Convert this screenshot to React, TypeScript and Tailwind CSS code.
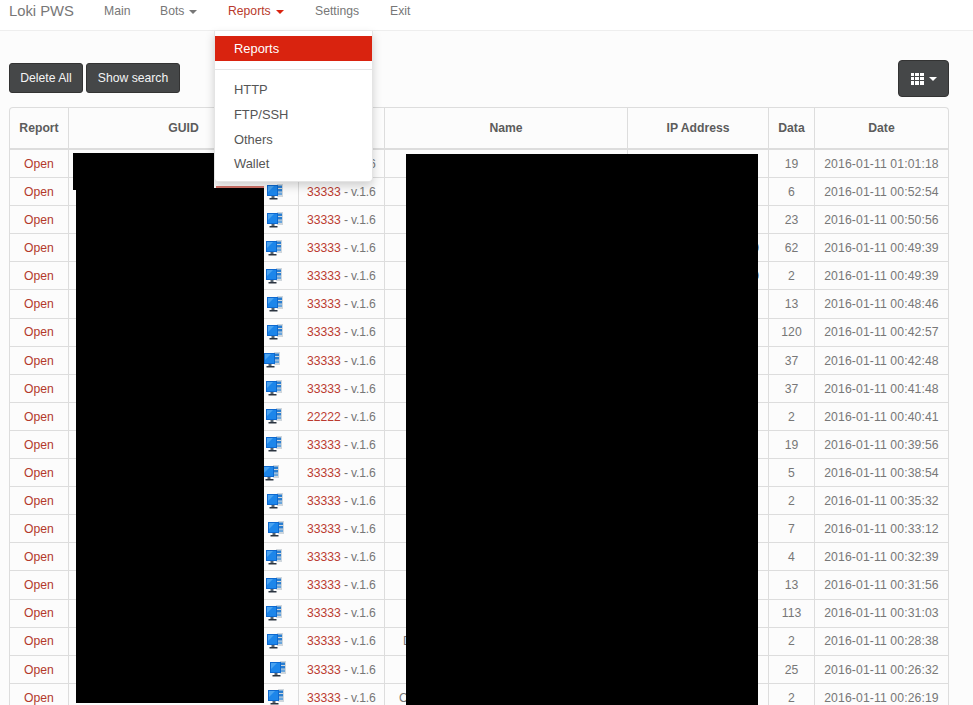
import React from "react";

type Row = {
  version: string;
  data: number;
  date: string;
  iconLeft: number;
  name?: string;
  nameLeft?: number;
  ip?: boolean;
};

const rows: Row[] = [
  { version: "33333", data: 19, date: "2016-01-11 01:01:18", iconLeft: 198 },
  { version: "33333", data: 6, date: "2016-01-11 00:52:54", iconLeft: 198 },
  { version: "33333", data: 23, date: "2016-01-11 00:50:56", iconLeft: 198 },
  { version: "33333", data: 62, date: "2016-01-11 00:49:39", iconLeft: 197, ip: true },
  { version: "33333", data: 2, date: "2016-01-11 00:49:39", iconLeft: 197, ip: true },
  { version: "33333", data: 13, date: "2016-01-11 00:48:46", iconLeft: 198 },
  { version: "33333", data: 120, date: "2016-01-11 00:42:57", iconLeft: 198 },
  { version: "33333", data: 37, date: "2016-01-11 00:42:48", iconLeft: 195 },
  { version: "33333", data: 37, date: "2016-01-11 00:41:48", iconLeft: 197 },
  { version: "22222", data: 2, date: "2016-01-11 00:40:41", iconLeft: 197 },
  { version: "33333", data: 19, date: "2016-01-11 00:39:56", iconLeft: 197 },
  { version: "33333", data: 5, date: "2016-01-11 00:38:54", iconLeft: 194 },
  { version: "33333", data: 2, date: "2016-01-11 00:35:32", iconLeft: 198 },
  { version: "33333", data: 7, date: "2016-01-11 00:33:12", iconLeft: 199 },
  { version: "33333", data: 4, date: "2016-01-11 00:32:39", iconLeft: 197 },
  { version: "33333", data: 13, date: "2016-01-11 00:31:56", iconLeft: 197 },
  { version: "33333", data: 113, date: "2016-01-11 00:31:03", iconLeft: 197 },
  { version: "33333", data: 2, date: "2016-01-11 00:28:38", iconLeft: 198, name: "D", nameLeft: 18 },
  { version: "33333", data: 25, date: "2016-01-11 00:26:32", iconLeft: 201 },
  { version: "33333", data: 2, date: "2016-01-11 00:26:19", iconLeft: 199, name: "O", nameLeft: 14 },
];

const Caret = ({ className }: { className: string }) => (
  <span className={`ml-[5px] inline-block h-0 w-0 border-x-[4px] border-t-[4px] border-x-transparent align-middle ${className}`} />
);

const ComputerIcon = () => (
  <svg width="16" height="16" viewBox="0 0 16 16" className="block">
    <rect x="10" y="0" width="6" height="13" fill="#cfd6dc" />
    <rect x="11" y="1.5" width="4" height="2.5" fill="#2a7ed0" />
    <rect x="11" y="5" width="4" height="2.5" fill="#2a7ed0" />
    <rect x="11" y="8.5" width="4" height="2.5" fill="#6aa6dc" />
    <rect x="0" y="1" width="11" height="11" fill="#0e69cf" />
    <rect x="1" y="2" width="9" height="9" fill="#1d86ea" />
    <path d="M1 2h6l-6 6z" fill="#4aa3f0" />
    <rect x="4.5" y="12" width="3" height="2" fill="#56636f" />
    <rect x="2.5" y="14" width="8" height="1.5" fill="#2b3440" />
  </svg>
);

const NavItem = ({ label, active, caret }: { label: string; active?: boolean; caret?: boolean }) => (
  <span className={active ? "text-[#b8392c]" : "text-[#777]"}>
    {label}
    {caret && <Caret className={active ? "border-t-[#d9230f]" : "border-t-[#777]"} />}
  </span>
);

const DarkButton = ({ children, className }: { children: React.ReactNode; className: string }) => (
  <button className={`flex items-center justify-center border border-[#333] bg-[#454748] text-[#f4f4f4] ${className}`}>
    {children}
  </button>
);

const App = () => {
  return (
    <div
      className="relative h-[705px] w-[973px] overflow-hidden bg-[#fcfcfc] text-[12.2px] text-[#777]"
      style={{ fontFamily: '"Liberation Sans", Arial, sans-serif' }}
    >
      <nav className="flex h-[31px] items-start border-b border-[#eee] bg-white pt-[3px] leading-[16px]">
        <span className="ml-[9px] w-[95px] text-[14.8px] text-[#777]">Loki PWS</span>
        <span className="w-[56px]"><NavItem label="Main" /></span>
        <span className="w-[68px]"><NavItem label="Bots" caret /></span>
        <span className="relative w-[87px]">
          <NavItem label="Reports" active caret />
          <div className="absolute left-[-14px] top-[28px] z-10 h-[151px] w-[159px] rounded-b-[4px] border border-t-0 border-[#e4e4e4] bg-white pt-[5px] text-[12.9px] text-[#555] shadow-[0_4px_10px_rgba(0,0,0,0.18)]">
            <div className="flex h-[25px] items-center bg-[#d9230f] pl-[19px] text-white">Reports</div>
            <div className="mt-[8px] h-px bg-[#e5e5e5]" />
            <div className="mt-[8px]">
              {["HTTP", "FTP/SSH", "Others", "Wallet"].map((item) => (
                <div key={item} className="flex h-[24.7px] items-center pl-[19px]">{item}</div>
              ))}
            </div>
          </div>
        </span>
        <span className="w-[75px]"><NavItem label="Settings" /></span>
        <NavItem label="Exit" />
      </nav>

      <div className="ml-[9px] flex w-[940px] items-start justify-between pt-[29px]">
        <div className="mt-[3px] flex gap-[3px]">
          <DarkButton className="h-[30px] w-[74px] rounded-[3px] pt-[1px]">Delete All</DarkButton>
          <DarkButton className="h-[30px] w-[94px] rounded-[3px] pt-[1px]">Show search</DarkButton>
        </div>
        <DarkButton className="h-[37px] w-[51px] rounded-[4px]">
          <span className="grid h-[12px] w-[13px] grid-cols-3 gap-px">
            {Array.from({ length: 9 }).map((_, i) => (
              <span key={i} className="bg-white" />
            ))}
          </span>
          <Caret className="border-t-white" />
        </DarkButton>
      </div>

      <div className="ml-[9px] mt-[10px] w-[940px] overflow-hidden rounded-t-[4px] border-x border-t border-[#ddd]">
        <table className="w-[938px] table-fixed border-separate border-spacing-0">
          <colgroup>
            <col className="w-[59px]" />
            <col className="w-[230px]" />
            <col className="w-[86px]" />
            <col className="w-[243px]" />
            <col className="w-[141px]" />
            <col className="w-[46px]" />
            <col className="w-[133px]" />
          </colgroup>
          <thead>
            <tr className="h-[42px] font-bold text-[#5c5c5c]">
              {["Report", "GUID", "Version", "Name", "IP Address", "Data", "Date"].map((h, i) => (
                <th key={h} className={`border-b-[2px] border-[#ddd] text-center ${i < 6 ? "border-r" : ""}`}>{h}</th>
              ))}
            </tr>
          </thead>
          <tbody>
            {rows.map((r) => (
              <tr key={r.date + r.data} className="h-[28.1px]">
                <td className="border-b border-r border-[#ddd] pt-px text-center text-[#b3392c]">Open</td>
                <td className="border-b border-r border-[#ddd] p-0">
                  <div className="flex items-center" style={{ paddingLeft: r.iconLeft }}>
                    <ComputerIcon />
                  </div>
                </td>
                <td className="border-b border-r border-[#ddd] pl-[8px] pt-px">
                  <span className="text-[#bb3b30]">{r.version}</span>
                  <span className="tracking-[-0.2px]"> - v.1.6</span>
                </td>
                <td className="border-b border-r border-[#ddd] p-0 pt-px">
                  {r.name && <span style={{ paddingLeft: r.nameLeft }}>{r.name}</span>}
                </td>
                <td className="border-b border-r border-[#ddd] pr-[9px] pt-px text-right text-[#555]">{r.ip ? "0" : ""}</td>
                <td className="border-b border-r border-[#ddd] pt-px text-center">{r.data}</td>
                <td className="border-b border-[#ddd] pt-px text-center tracking-[0.12px]">{r.date}</td>
              </tr>
            ))}
          </tbody>
        </table>
      </div>

      {/* redaction blocks painted over the screenshot */}
      <div className="absolute left-[73px] top-[153px] h-[37px] w-[141px] bg-black" />
      <div className="absolute left-[76px] top-[188px] h-[515px] w-[188px] bg-black" />
      <div className="absolute left-[216px] top-[186px] h-[2px] w-[48px] bg-[#c0392b]/70" />
      <div className="absolute left-[406px] top-[154px] h-[551px] w-[352px] bg-black" />
    </div>
  );
};

export default App;
